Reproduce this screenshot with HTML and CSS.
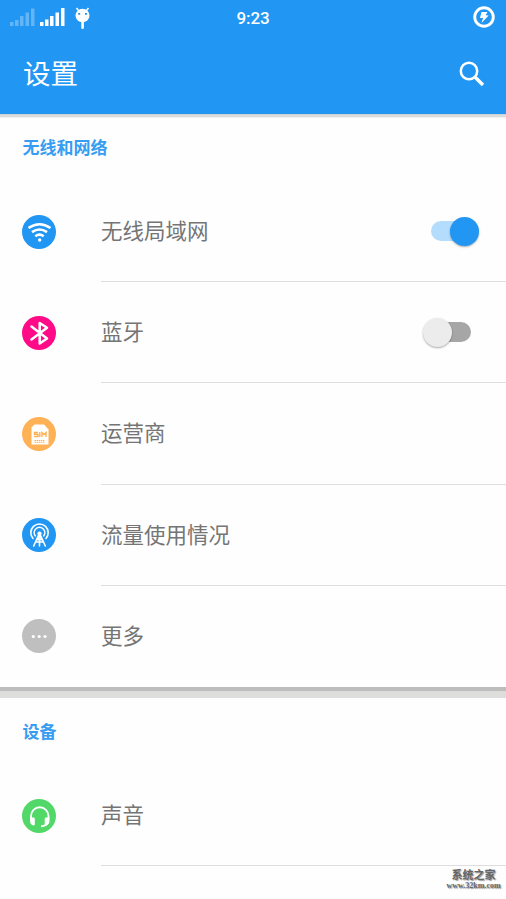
FILE: index.html
```html
<!DOCTYPE html>
<html lang="zh-CN">
<head>
<meta charset="utf-8">
<title>设置</title>
<link rel="stylesheet" href="styles.css">
</head>
<body>
<header class="header">
  <div class="status">
    <svg class="status-left" width="100" height="36" viewBox="0 0 100 36" fill="#fff">
      <path opacity=".3" d="M10 22h3.500v4H10zM15 20h3.500v6H15zM20 16h3.500v10H20zM25.500 12.500H29V26h-3.500zM31 8.500h3.500V26H31z"/>
      <path d="M40 22h3.500v4H40zM45 19.500h3.500V26H45zM50 16h3.500v10H50zM55.500 12.500H59V26h-3.500zM61 8h3.500v18H61z"/>
      <path d="M76.500 8l2 2.500M88.500 8l-2 2.500" stroke="#fff" stroke-width="1.500"/>
      <ellipse cx="82.500" cy="15.500" rx="7" ry="6.800"/>
      <rect x="81.300" y="21" width="2.600" height="8" rx="1.200"/>
      <path d="M78.200 13h2v1.800h-2zM85 13h2v1.800h-2z" fill="#2196f3"/>
    </svg>
    <span class="clock">9:23</span>
    <svg class="battery" width="22" height="22" viewBox="0 0 22 22">
      <circle cx="11" cy="11" r="9.300" fill="none" stroke="#fff" stroke-width="2.900"/>
      <path d="M8.500 6h6l-1.800 3.300 3 .3-7.200 7.400 1.600-5H7z" fill="#fff"/>
    </svg>
  </div>
  <div class="appbar">
    <h1>设置</h1>
    <svg width="28" height="28" viewBox="0 0 28 28" fill="none" stroke="#fff">
      <circle cx="11" cy="11" r="8.200" stroke-width="2.500"/>
      <path d="M17.200 17.200L25 25" stroke-width="3.400"/>
    </svg>
  </div>
</header>
<main>
  <section class="section first">
    <h2>无线和网络</h2>
    <div class="row">
      <svg class="icon" viewBox="0 0 34 34"><circle cx="17" cy="17" r="17" fill="#2196f3"/><g fill="none" stroke="#fff" stroke-width="2.600"><path d="M6.500 13q11-7.500 22 0M10 17.100q7.500-5.200 15 0M13.300 21.200q4.200-3 8.400 0"/></g><circle cx="17.700" cy="25" r="1.700" fill="#fff"/></svg>
      <div class="label"><span>无线局域网</span><i class="switch on"></i></div>
    </div>
    <div class="row">
      <svg class="icon" viewBox="0 0 34 34"><circle cx="17" cy="17" r="17" fill="#ff0a87"/><path d="M9.500 10.500L25 22.500l-7.300 5V7L25 11.700 9.500 23.500" fill="none" stroke="#fff" stroke-width="2.500" stroke-linejoin="round" stroke-linecap="round"/></svg>
      <div class="label"><span>蓝牙</span><i class="switch"></i></div>
    </div>
    <div class="row">
      <svg class="icon" viewBox="0 0 34 34"><circle cx="17" cy="17" r="17" fill="#ffb155"/><path d="M9.500 10.500L12.500 7.500h9.500l4.500 5v15h-17z" fill="#fff"/><g fill="none" stroke="#ffab4b" stroke-width="1.300"><path d="M16 15.500h-3.500v2H16v2.200h-3.800M17.800 15v5M20 20v-4.500l2 2 2-2V20"/><path d="M12.500 23.500H23M12.500 25.300H23" stroke-width="1" stroke-dasharray="1.500 .6"/></g></svg>
      <div class="label"><span>运营商</span></div>
    </div>
    <div class="row">
      <svg class="icon" viewBox="0 0 34 34"><circle cx="17" cy="17" r="17" fill="#2196f3"/><g fill="none" stroke="#fff" stroke-width="1.600" stroke-linecap="round"><path d="M11 20.500a8.700 8.700 0 1 1 13 0M13.200 17.800a5.300 5.300 0 1 1 8.600 0M17.500 15l-5.800 13M17.500 15l5.800 13M17.500 15v13M15 21h5M13.800 24l7.400 0"/></g><circle cx="17.500" cy="15.500" r="2.100" fill="#fff"/><path d="M17.500 15l2.500 7.500h-5z" fill="#fff"/></svg>
      <div class="label"><span>流量使用情况</span></div>
    </div>
    <div class="row last">
      <svg class="icon" viewBox="0 0 34 34"><circle cx="17" cy="17" r="17" fill="#bfbfbf"/><g fill="#fff"><circle cx="11.300" cy="17.500" r="1.600"/><circle cx="17.200" cy="17.500" r="1.600"/><circle cx="23" cy="17.500" r="1.600"/></g></svg>
      <div class="label"><span>更多</span></div>
    </div>
  </section>
  <div class="gap"></div>
  <section class="section">
    <h2>设备</h2>
    <div class="row">
      <svg class="icon" viewBox="0 0 34 34"><circle cx="17" cy="17" r="17" fill="#52d869"/><path d="M9 20v-3a8.700 8.700 0 0 1 17.500 0v3M26 23q-1 4-7 4.300" fill="none" stroke="#fff" stroke-width="1.800"/><path d="M8 18.500h3.500q1.300 0 1.300 1.300v5.400q0 1.200-1.500 1.200Q8 25.500 8 22zM27.500 18.500H24q-1.300 0-1.300 1.300v5.400q0 1.200 1.500 1.200 3.300-.9 3.300-4.400z" fill="#fff"/></svg>
      <div class="label"><span>声音</span></div>
    </div>
  </section>
</main>
<div class="watermark"><b>系统之家</b><span>www.32km.com</span></div>
</body>
</html>
```

FILE: styles.css
```css
* { box-sizing: border-box; }
body { margin: 0; height: 899px; overflow: hidden; position: relative; background: #fefefe; font-family: Roboto, "Noto Sans CJK SC", sans-serif; color: #757575; }
.header { height: 114px; background: #2196f3; color: #fff; }
.status { height: 36px; display: grid; grid-template-columns: 1fr auto 1fr; align-items: center; }
.status-left { display: block; }
.clock { font-size: 17px; font-weight: 500; line-height: 36px; letter-spacing: -.1px; }
.battery { justify-self: end; margin: -2px 11px 0 0; }
.appbar { height: 76px; display: flex; align-items: center; justify-content: space-between; padding: 0 20px 0 23px; }
h1 { margin: 0; padding-top: 2px; font-size: 27.500px; font-weight: 400; line-height: 40px; }
.section { background: #fefefe; }
.first { background: linear-gradient(#cfd3d6 0 1px, #dcdcda 1px 3px, #f0f0f0 3px 4px, #fefefe 4px); }
h2 { margin: 0; height: 67px; padding: 0 22.500px; font-size: 17px; line-height: 68px; font-weight: 700; color: #369df2; }
.row { height: 101.200px; display: flex; align-items: center; padding-left: 22px; }
.icon { width: 34px; height: 34px; margin-right: 45px; flex: none; }
.label { flex: 1; height: 100%; display: flex; align-items: center; justify-content: space-between; border-bottom: 1.500px solid #dedede; font-size: 21.500px; }
.label span { padding-bottom: 3px; }
.last .label { border-bottom: 0; }
.switch { width: 40px; height: 20px; margin-right: 35px; border-radius: 10px; background: #a6a6a6; display: flex; align-items: center; }
.switch::before { content: ""; width: 29px; height: 29px; flex: none; margin-left: -8px; border-radius: 50%; background: #ececec; box-shadow: 0 1px 2px #0005; }
.switch.on { background: #b4dcfc; }
.switch.on::before { background: #2196f3; margin-left: 19px; }
.gap { height: 11px; background: linear-gradient(#bdbdbd 0 4px, #dddddb 4px); }
.watermark { position: absolute; right: 5px; top: 870px; width: 55px; text-align: center; color: #666; text-shadow: 1px 1px 1px #999; display: flex; flex-direction: column; line-height: 11px; }
.watermark b { font-size: 11px; }
.watermark span { font: bold 8px/10px "Liberation Serif", serif; }
```
